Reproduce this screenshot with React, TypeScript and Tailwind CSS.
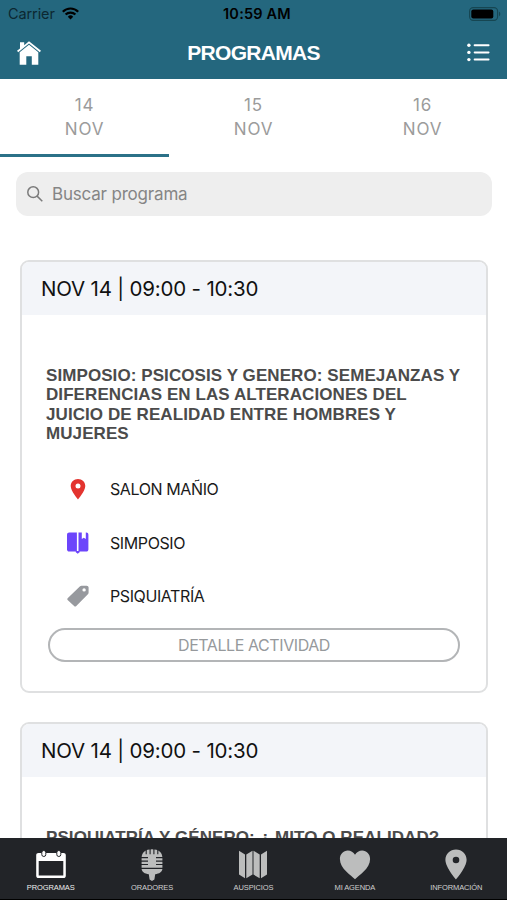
import { useState } from "react";
import type { ReactNode } from "react";

interface Day {
  num: string;
  month: string;
}

interface Activity {
  id: number;
  time: string;
  title: string[];
  room: string;
  kind: string;
  area: string;
}

var days: Day[] = [
  { num: "14", month: "NOV" },
  { num: "15", month: "NOV" },
  { num: "16", month: "NOV" },
];

var activities: Activity[] = [
  {
    id: 1,
    time: "NOV 14 | 09:00 - 10:30",
    title: [
      "SIMPOSIO: PSICOSIS Y GENERO: SEMEJANZAS Y",
      "DIFERENCIAS EN LAS ALTERACIONES DEL",
      "JUICIO DE REALIDAD ENTRE HOMBRES Y",
      "MUJERES",
    ],
    room: "SALON MAÑIO",
    kind: "SIMPOSIO",
    area: "PSIQUIATRÍA",
  },
  {
    id: 2,
    time: "NOV 14 | 09:00 - 10:30",
    title: ["PSIQUIATRÍA Y GÉNERO: ¿ MITO O REALIDAD?"],
    room: "SALON MAÑIO",
    kind: "SIMPOSIO",
    area: "PSIQUIATRÍA",
  },
];

function WifiIcon() {
  return (
    <svg width="17" height="13" viewBox="0 0 17 13" fill="none" stroke="#000" strokeWidth="2.2">
      <path d="M0.8 4.7a10.9 10.9 0 0 1 15.4 0" />
      <path d="M3.6 7.6a6.9 6.9 0 0 1 9.8 0" />
      <path d="M8.5 12.4L5.8 9.7a3.8 3.8 0 0 1 5.4 0z" fill="#000" stroke="none" />
    </svg>
  );
}

function BatteryIcon() {
  return (
    <svg width="32" height="14" viewBox="0 0 32 14">
      <rect x="0.6" y="0.6" width="28" height="12.8" rx="3.6" fill="none" stroke="#164652" strokeWidth="1.1" />
      <rect x="2.3" y="2.4" width="22" height="9.2" rx="2" fill="#000" />
      <path d="M30 4.8c1.7.5 1.7 3.9 0 4.4z" fill="#164652" />
    </svg>
  );
}

function HomeIcon() {
  return (
    <svg width="24" height="24" viewBox="0 0 24 24" fill="#fff">
      <path d="M3 1.3h4.2v2.9L12 .2l12 9.6-1.2 1.4L12 2.5 1.2 11.2 0 9.8l3-2.4z" />
      <path d="M12 3.7l9.3 7.5v12.5h-6.5v-8.5H9.3v8.5H2.7V11.2z" />
    </svg>
  );
}

function ListIcon() {
  return (
    <svg width="23" height="19" viewBox="0 0 23 19" fill="#fff">
      <circle cx="1.9" cy="2.3" r="1.7" />
      <circle cx="1.9" cy="9.4" r="1.7" />
      <circle cx="1.9" cy="16.6" r="1.7" />
      <rect x="6.7" y="1.3" width="15.8" height="2" rx="0.8" />
      <rect x="6.7" y="8.4" width="15.8" height="2" rx="0.8" />
      <rect x="6.7" y="15.6" width="15.8" height="2" rx="0.8" />
    </svg>
  );
}

function SearchIcon() {
  return (
    <svg width="16" height="16" viewBox="0 0 16 16" fill="none" stroke="#7b7b7b" strokeWidth="1.5">
      <circle cx="6.2" cy="6.2" r="5.4" />
      <path d="M10.1 10.1l5.2 5.1" />
    </svg>
  );
}

function PinIcon() {
  return (
    <svg width="22" height="22" viewBox="0 0 22 22">
      <path
        d="M11 1c-4.100 0-7.300 3.100-7.300 7.100C3.700 13.300 11 21.400 11 21.400s7.300-8.100 7.300-13.300C18.300 4.100 15.100 1 11 1zm0 9.600a2.500 2.500 0 1 1 0-5 2.500 2.500 0 0 1 0 5z"
        fill="#e3342f"
      />
    </svg>
  );
}

function BookIcon() {
  return (
    <svg width="22" height="22" viewBox="0 0 22 22" fill="#6c45fb">
      <path d="M2.200.6h7.700v19H2.200C1 19.600 0 18.700 0 17.500V2.700C0 1.500 1 .6 2.200.6z" />
      <path d="M11.500.6h3.300v6.300l2-1.200 2 1.200V.6h.5c1.200 0 2.100.9 2.100 2.100v14.800c0 1.200-.9 2.100-2.100 2.100h-7.800z" />
      <path d="M8.800 19h3.800v1.200l-1.900 1.600-1.900-1.600z" />
    </svg>
  );
}

function TagIcon() {
  return (
    <svg width="22" height="22" viewBox="0 0 22 22" fill="#97999e">
      <path
        fillRule="evenodd"
        d="M14.500.7h5.200c1.100 0 1.900.8 1.900 1.900v5c0 .7-.2 1.200-.7 1.700L9.300 20.900c-.8.8-1.500.8-2.200 0L.9 15.300c-.8-.8-.8-1.500 0-2.300L12.800 1.400c.5-.5 1-.7 1.700-.7zm2.600 2.500a1.700 1.700 0 1 0 0 3.400 1.700 1.700 0 0 0 0-3.400z"
      />
    </svg>
  );
}

function CalendarIcon() {
  return (
    <svg width="32" height="30" viewBox="0 0 32 30">
      <path
        fillRule="evenodd"
        fill="#fff"
        d="M3.500 3h25c1.400 0 2.300.9 2.300 2.300v20.500c0 1.400-.9 2.300-2.300 2.300h-25c-1.400 0-2.300-.9-2.300-2.300V5.300C1.200 3.900 2.100 3 3.500 3zM3.700 11v14.600h24.600V11z"
      />
      <rect x="6.800" y="0.500" width="4" height="6" rx="2" fill="#fff" stroke="#222428" strokeWidth="1" />
      <rect x="21.800" y="0.500" width="4" height="6" rx="2" fill="#fff" stroke="#222428" strokeWidth="1" />
    </svg>
  );
}

function MicIcon() {
  return (
    <svg width="22" height="32" viewBox="0 0 22 32">
      <path d="M.6 9C.6 3.500 4.500.3 11 .3S21.400 3.500 21.400 9v9.700H.6z" fill="#bcbdbd" />
      <path d="M.6 20h20.800c-.3 3-3 4.700-7.200 5.200l-.8 5.300-2.400 1.400-2.400-1.400-.8-5.300C3.600 24.700.9 23 .6 20z" fill="#bcbdbd" />
      <path d="M5.200 0v5.300M9.100 0v5.300M12.900 0v5.300M16.800 0v5.300" stroke="#222428" strokeWidth="1.100" />
      <path d="M0 8.700h7M0 12.100h7M0 15.500h7M15 8.700h7M15 12.100h7M15 15.500h7" stroke="#222428" strokeWidth="1.200" />
    </svg>
  );
}

function MapIcon() {
  return (
    <svg width="28" height="29" viewBox="0 0 28 29" fill="#bcbdbd">
      <path d="M0 .8l6 3.600v23.800l-6-3.600z" />
      <path d="M7.300 4.400l6.200-3.600v23.800l-6.200 3.600z" />
      <path d="M14.500.8l6.200 3.600v23.800l-6.200-3.600z" />
      <path d="M22 4.400l6-3.600v23.800l-6 3.600z" />
    </svg>
  );
}

function HeartIcon() {
  return (
    <svg width="32" height="30" viewBox="0 0 32 30" fill="#bcbdbd">
      <path d="M16 29.300C12.300 25.200.9 18.700.9 8.900.9 4.200 4.400.5 8.800.5c3 0 5.700 1.700 7.200 4.300C17.500 2.200 20.200.5 23.200.5c4.400 0 7.900 3.700 7.900 8.400 0 9.800-11.400 16.300-15.100 20.400z" />
    </svg>
  );
}

function PlaceIcon() {
  return (
    <svg width="22" height="31" viewBox="0 0 22 31" fill="#bcbdbd">
      <path
        fillRule="evenodd"
        d="M11 .4C5.100.4.4 5 .4 10.700.4 18.300 11 30.400 11 30.400s10.600-12.100 10.600-19.700C21.600 5 16.900.4 11 .4zm0 7.300a3.300 3.300 0 1 0 0 6.600 3.300 3.300 0 0 0 0-6.600z"
      />
    </svg>
  );
}

var tabs = [
  { label: "PROGRAMAS", icon: <CalendarIcon /> },
  { label: "ORADORES", icon: <MicIcon /> },
  { label: "AUSPICIOS", icon: <MapIcon /> },
  { label: "MI AGENDA", icon: <HeartIcon /> },
  { label: "INFORMACIÓN", icon: <PlaceIcon /> },
];

function InfoRow({ icon, text }: { icon: ReactNode; text: string }) {
  return (
    <div className="flex h-[53.7px] items-center">
      <span className="ml-[45px] w-[43px]">{icon}</span>
      <span className="text-[16px] tracking-[-0.4px] text-[#1a1a1a]">{text}</span>
    </div>
  );
}

function ActivityCard({ item }: { item: Activity }) {
  return (
    <div className="h-[433px] shrink-0 overflow-hidden rounded-[9px] border-2 border-[#dfe0e1] bg-white">
      <div className="flex h-[53px] items-center bg-[#f3f5f9] pt-px pl-[19px] text-[20.5px] tracking-[-0.19px] text-[#111]">
        {item.time}
      </div>
      <div className="h-[147px] pt-[50.6px] pl-6 font-['Liberation_Sans',Arial,sans-serif] text-[17px] leading-[19.5px] font-bold tracking-[0.08px] text-[#4b4b4b]">
        {item.title.map(function (line, i) {
          return <p key={i} className="whitespace-nowrap">{line}</p>;
        })}
      </div>
      <InfoRow icon={<PinIcon />} text={item.room} />
      <InfoRow icon={<BookIcon />} text={item.kind} />
      <InfoRow icon={<TagIcon />} text={item.area} />
      <button className="mt-[5px] ml-[26px] block h-[34px] w-[412px] rounded-full border-2 border-[#b3b5b7] text-[16px] tracking-[-0.42px] text-[#96999c]">
        DETALLE ACTIVIDAD
      </button>
    </div>
  );
}

export default function App() {
  var [day, setDay] = useState(0);
  var [tab, setTab] = useState(0);

  return (
    <div className="flex h-[900px] w-[507px] flex-col overflow-hidden bg-white font-[Inter,sans-serif]">
      <header className="h-[79px] shrink-0 bg-[#24677e]">
        <div className="grid h-[27px] grid-cols-3 items-center pr-[6px] pl-2 text-[14.5px] text-black">
          <div className="flex items-center gap-[7px]">
            <span className="tracking-[-0.1px] text-[#0c2831]">Carrier</span>
            <WifiIcon />
          </div>
          <span className="pl-[5px] text-center font-semibold tracking-[0.2px]">10:59 AM</span>
          <span className="justify-self-end">
            <BatteryIcon />
          </span>
        </div>
        <div className="grid h-[51px] grid-cols-3 items-center px-[17px]">
          <HomeIcon />
          <h1 className="pt-px text-center font-['Liberation_Sans',Arial,sans-serif] text-[21px] font-bold tracking-[-0.7px] text-white">
            PROGRAMAS
          </h1>
          <span className="justify-self-end">
            <ListIcon />
          </span>
        </div>
      </header>

      <div className="grid h-[78px] shrink-0 grid-cols-3">
        {days.map(function (d, i) {
          return (
            <button
              key={d.num}
              onClick={function () { setDay(i); }}
              className={
                "flex flex-col items-center border-b-[3px] pt-[14px] text-[17px] leading-6 tracking-[0.8px] text-[#9b9b9b] " +
                (i === day ? "border-[#2b7188]" : "border-transparent")
              }
            >
              <span>{d.num}</span>
              <span>{d.month}</span>
            </button>
          );
        })}
      </div>

      <main className="flex min-h-0 flex-1 flex-col overflow-hidden pt-[15px]">
        <div className="mr-[15px] ml-[15.5px] flex h-11 shrink-0 items-center gap-[9px] rounded-xl bg-[#eee] pl-[11.5px] text-[17px] tracking-[-0.19px] text-[#858585]">
          <SearchIcon />
          <span className="pt-px">Buscar programa</span>
        </div>
        <div className="mt-[44px] flex flex-col gap-[29px] pr-[19px] pl-5">
          {activities.map(function (a) {
            return <ActivityCard key={a.id} item={a} />;
          })}
        </div>
      </main>

      <nav className="grid h-[62px] shrink-0 grid-cols-5 border-b border-black bg-[#222428]">
        {tabs.map(function (t, i) {
          return (
            <button
              key={t.label}
              onClick={function () { setTab(i); }}
              className="flex flex-col items-center pt-[10px]"
            >
              <span className="flex h-[33px] items-center">{t.icon}</span>
              <span
                className={
                  "font-['Liberation_Sans',Arial,sans-serif] text-[7.5px] leading-[13px] tracking-[-0.1px] " +
                  (i === tab ? "text-[#eee]" : "text-[#d0d0d0]")
                }
              >
                {t.label}
              </span>
            </button>
          );
        })}
      </nav>
    </div>
  );
}
